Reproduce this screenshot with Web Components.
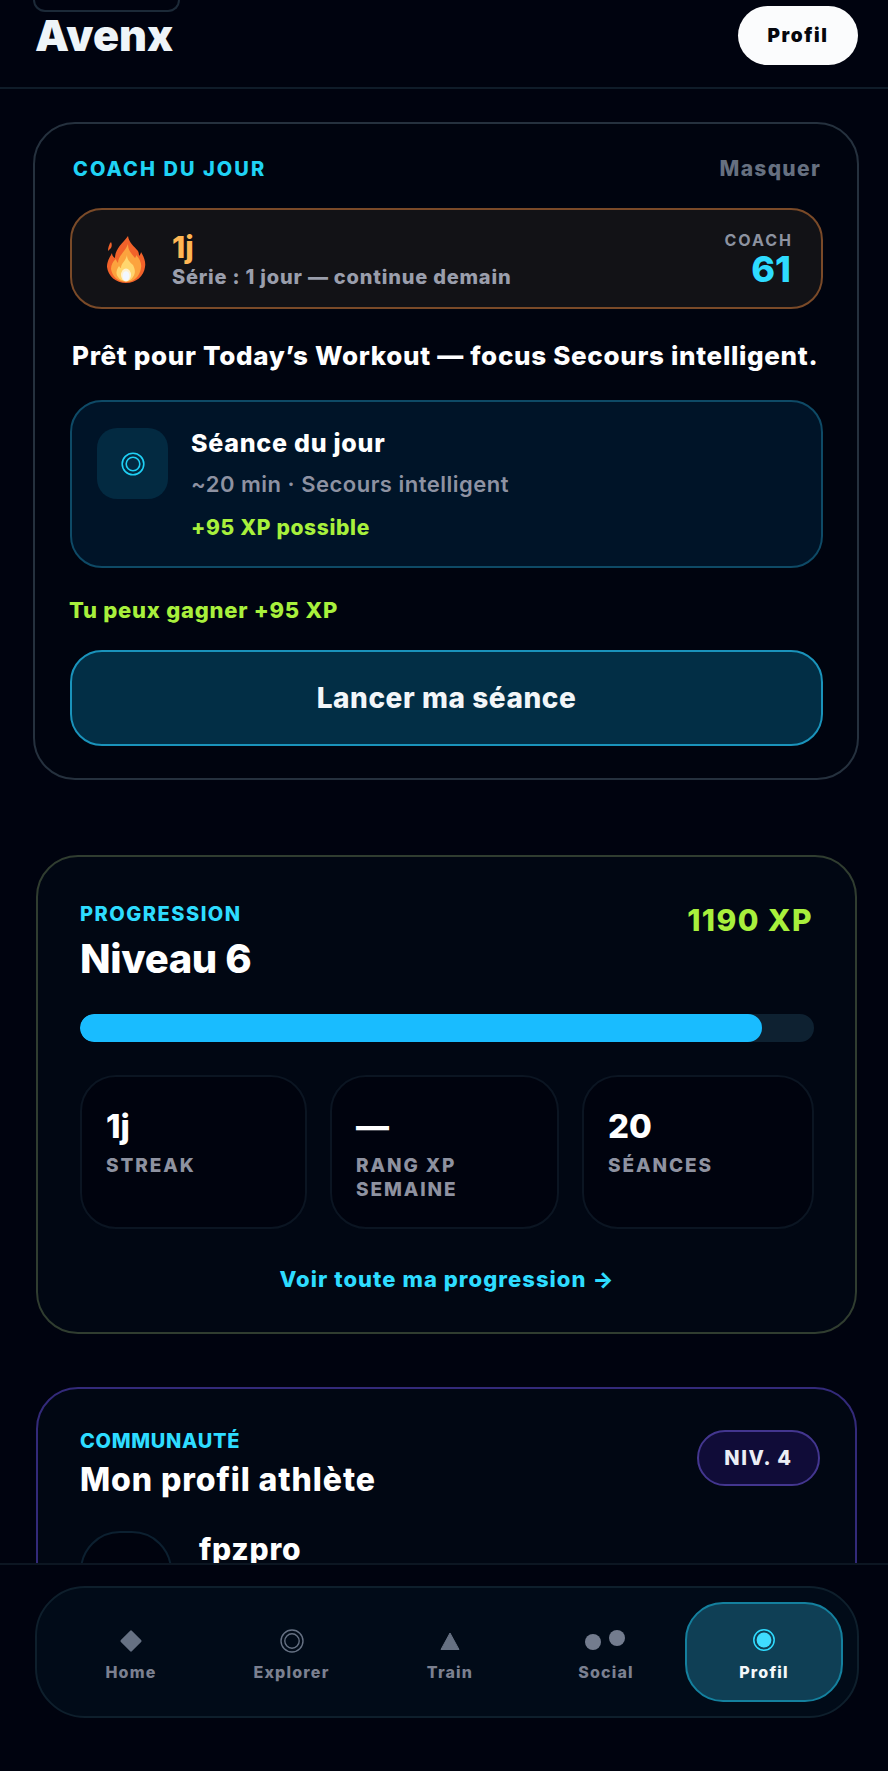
<!DOCTYPE html>
<html lang="fr">
<head>
<meta charset="utf-8">
<title>Avenx</title>
<style>
  html, body { margin: 0; background: #00030f; }
  body { font-family: Inter, "Liberation Sans", sans-serif; color: #fff; }
</style>
</head>
<body>

<app-shell>
  <top-header slot="header">
    <span slot="brand">Avenx</span>
    <span slot="action">Profil</span>
  </top-header>

  <coach-card>
    <span slot="title">COACH DU JOUR</span>
    <span slot="action">Masquer</span>
    <streak-banner>
      <span slot="value">1j</span>
      <span slot="text">Série : 1 jour — continue demain</span>
      <span slot="score-label">COACH</span>
      <span slot="score">61</span>
    </streak-banner>
    <span slot="message">Prêt pour Today’s Workout — focus Secours intelligent.</span>
    <session-card slot="session">
      <span slot="title">Séance du jour</span>
      <span slot="meta">~20 min · Secours intelligent</span>
      <span slot="xp">+95 XP possible</span>
    </session-card>
    <span slot="gain">Tu peux gagner +95 XP</span>
    <span slot="cta">Lancer ma séance</span>
  </coach-card>

  <progress-card>
    <span slot="eyebrow">PROGRESSION</span>
    <span slot="title">Niveau 6</span>
    <span slot="xp">1190 XP</span>
    <stat-tile><span slot="value">1j</span>STREAK</stat-tile>
    <stat-tile><span slot="value">—</span>RANG XP SEMAINE</stat-tile>
    <stat-tile><span slot="value">20</span>SÉANCES</stat-tile>
    <span slot="link">Voir toute ma progression →</span>
  </progress-card>

  <profile-card>
    <span slot="eyebrow">COMMUNAUTÉ</span>
    <span slot="title">Mon profil athlète</span>
    <span slot="badge">NIV. 4</span>
    <span slot="name">fpzpro</span>
  </profile-card>

  <bottom-nav slot="nav">
    <nav-item icon="home">Home</nav-item>
    <nav-item icon="explore">Explorer</nav-item>
    <nav-item icon="train">Train</nav-item>
    <nav-item icon="social">Social</nav-item>
    <nav-item icon="profile" active>Profil</nav-item>
  </bottom-nav>
</app-shell>

<script>
// small helper, every element is just a template + open shadow root
function defineElement(name, html) {
  const template = document.createElement('template');
  template.innerHTML = html;
  customElements.define(name, class extends HTMLElement {
    connectedCallback() {
      if (this.shadowRoot) return;
      this.attachShadow({ mode: 'open' }).appendChild(template.content.cloneNode(true));
    }
  });
}

defineElement('app-shell', `
  <style>
    :host { display: flex; flex-direction: column; height: 1771px; overflow: hidden; background: #00030f; }
    main { flex: 1; min-height: 0; overflow: hidden; display: flex; flex-direction: column; }
  </style>
  <slot name="header"></slot>
  <main><slot></slot></main>
  <slot name="nav"></slot>
`);

defineElement('top-header', `
  <style>
    :host { display: block; flex: none; height: 87px; border-bottom: 2px solid #0f1c29; position: relative; }
    .row { display: flex; justify-content: space-between; padding: 6px 30px 0 35px; }
    .stub { height: 12px; width: 147px; box-sizing: border-box;
      border: 2px solid #1c2a38; border-top: 0; border-radius: 0 0 16px 16px; position: absolute; top: 0; left: 33px; }
    .brand { font-size: 43px; font-weight: 900; line-height: 59px; letter-spacing: .1px; color: #eef4f8; }
    .action { width: 120px; height: 59px; border-radius: 30px; background: #fbfcfd; color: #05070d;
      display: flex; align-items: center; justify-content: center; font-size: 19px; font-weight: 900; letter-spacing: 1.6px; }
  </style>
  <div class="stub"></div>
  <div class="row">
    <div class="brand"><slot name="brand"></slot></div>
    <div class="action"><slot name="action"></slot></div>
  </div>
`);

defineElement('coach-card', `
  <style>
    :host { display: block; flex: none; margin: 33px 29px 0 33px; padding: 33px 34px 32px 35px; border: 2px solid #25313e;
      border-radius: 42px; background: #00040f; }
    .head { display: flex; justify-content: space-between; align-items: center; line-height: 24px; margin-bottom: 27px; }
    .title { color: #1fd3f5; font-size: 20px; font-weight: 800; letter-spacing: 2.05px; padding-left: 3px; }
    .action { color: #667080; font-size: 21px; font-weight: 800; letter-spacing: 1.3px; padding-right: 2px; }
    .message { font-size: 26px; font-weight: 800; line-height: 34px; margin: 30px 0 27px 2px; white-space: nowrap; letter-spacing: .68px; }
    .gain { color: #a8f03c; font-size: 22px; font-weight: 800; line-height: 26px; margin: 29px 0 27px -1px; letter-spacing: .75px; }
    .cta { height: 96px; box-sizing: border-box; border: 2px solid #1a93bb; border-radius: 32px; background: #022e45;
      display: flex; align-items: center; justify-content: center; color: #f2f6f9; font-size: 28px; font-weight: 800; letter-spacing: .55px; }
  </style>
  <div class="head">
    <div class="title"><slot name="title"></slot></div>
    <div class="action"><slot name="action"></slot></div>
  </div>
  <slot></slot>
  <div class="message"><slot name="message"></slot></div>
  <slot name="session"></slot>
  <div class="gain"><slot name="gain"></slot></div>
  <div class="cta"><slot name="cta"></slot></div>
`);

defineElement('streak-banner', `
  <style>
    :host { display: flex; align-items: center; height: 101px; box-sizing: border-box; padding: 0 30px 0 34px;
      border: 2px solid #7a4a28; border-radius: 32px; background: #121216; }
    svg { width: 40px; height: 48px; flex: none; margin-right: 26px; }
    .text { flex: 1; }
    .value { color: #ffb653; font-size: 30px; font-weight: 800; line-height: 32px; margin-top: 3px; }
    .line { color: #9a9eac; font-size: 20px; font-weight: 800; line-height: 26px; margin-top: 1px; letter-spacing: .8px; }
    .score { text-align: right; }
    .label { color: #8d92a0; font-size: 16px; font-weight: 700; letter-spacing: 2px; line-height: 20px; margin-right: -2px; }
    .num { color: #2edcff; font-size: 36px; font-weight: 800; line-height: 38px; }
  </style>
  <svg viewBox="0 0 40 48">
    <path fill="#f2622a" d="M22 1c1 7 6 10 10 15 1 2 1 4 1 5 1-1 2-3 2-4 3 5 5 10 4 15-1 9-9 16-19 16S2 41 1 32c0-6 3-10 5-14 0 2 1 4 3 5 0-9 7-14 13-22z"/>
    <path fill="#f2622a" d="M5 7c1 2 1 4 0 6l-3 3c0-3 1-7 3-9z"/>
    <path fill="#fca33e" d="M22 9c0 7 4 10 7 14 1-1 1-2 1-3 4 4 6 9 5 13-1 8-7 14-15 14S6 41 5 34c0-4 2-8 5-10 0 1 1 3 2 4 0-7 7-11 10-19z"/>
    <path fill="#ffd66e" d="M21 20c0 5 3 7 6 10 2 4 3 8 0 12-2 3-4 4-7 4s-6-1-8-4c-3-4-1-8 1-11 1 1 1 2 2 2 0-5 5-7 6-13z"/>
    <ellipse cx="20" cy="40" rx="5" ry="6.5" fill="#fff1cf"/>
    <ellipse cx="20" cy="41" rx="3.4" ry="4.8" fill="#f2f7ff"/>
  </svg>
  <div class="text">
    <div class="value"><slot name="value"></slot></div>
    <div class="line"><slot name="text"></slot></div>
  </div>
  <div class="score">
    <div class="label"><slot name="score-label"></slot></div>
    <div class="num"><slot name="score"></slot></div>
  </div>
`);

defineElement('session-card', `
  <style>
    :host { display: flex; align-items: flex-start; gap: 23px; height: 168px; box-sizing: border-box; padding: 26px 25px;
      border: 2px solid #0e4a66; border-radius: 32px; background: #001428; }
    .icon { width: 71px; height: 71px; flex: none; border-radius: 20px; background: #032a41;
      display: flex; align-items: center; justify-content: center; }
    svg { width: 24px; height: 24px; }
    .body { margin-top: -1px; }
    .title { font-size: 25px; font-weight: 800; line-height: 32px; letter-spacing: .75px; }
    .meta { color: #8e92a2; font-size: 22px; font-weight: 600; line-height: 30px; margin-top: 10px; letter-spacing: .5px; }
    .xp { color: #a8f03c; font-size: 21px; font-weight: 800; line-height: 26px; margin-top: 16px; letter-spacing: .65px; }
  </style>
  <div class="icon">
    <svg viewBox="0 0 24 24" fill="none" stroke="#1fd0f5" stroke-width="1.6">
      <circle cx="12" cy="12" r="10.8"/><circle cx="12" cy="12" r="6.8"/>
    </svg>
  </div>
  <div class="body">
    <div class="title"><slot name="title"></slot></div>
    <div class="meta"><slot name="meta"></slot></div>
    <div class="xp"><slot name="xp"></slot></div>
  </div>
`);

defineElement('progress-card', `
  <style>
    :host { display: block; flex: none; height: 479px; box-sizing: border-box; margin: 75px 31px 0 36px; padding: 45px 41px 0 42px;
      border: 2px solid #303d30; border-radius: 42px; background: #010713; }
    .head { display: flex; justify-content: space-between; height: 112px; }
    .eyebrow { color: #2edcff; font-size: 20px; font-weight: 800; letter-spacing: 1.5px; line-height: 24px; }
    .title { font-size: 40px; font-weight: 800; line-height: 48px; margin-top: 9px; letter-spacing: -.4px; }
    .xp { color: #a8f03c; font-size: 30px; font-weight: 800; line-height: 36px; letter-spacing: 1.4px; padding-right: 1px; }
    .track { height: 28px; border-radius: 14px; background: #0e2131; overflow: hidden; margin-bottom: 33px; }
    .fill { width: 682px; height: 100%; border-radius: 14px; background: #19bcff; }
    .grid { display: grid; grid-template-columns: 227px 229px 232px; gap: 23px; }
    .link { color: #2edcff; font-size: 22px; font-weight: 800; line-height: 30px; text-align: center; margin-top: 35px; letter-spacing: 1.05px; }
  </style>
  <div class="head">
    <div>
      <div class="eyebrow"><slot name="eyebrow"></slot></div>
      <div class="title"><slot name="title"></slot></div>
    </div>
    <div class="xp"><slot name="xp"></slot></div>
  </div>
  <div class="track"><div class="fill"></div></div>
  <div class="grid"><slot></slot></div>
  <div class="link"><slot name="link"></slot></div>
`);

defineElement('stat-tile', `
  <style>
    :host { display: block; height: 154px; box-sizing: border-box; padding: 28px 24px 0 24px;
      border: 2px solid #0b1522; border-radius: 36px; background: #00030e;
      color: #8e92a0; font-size: 19px; font-weight: 800; line-height: 24px; letter-spacing: 1.9px; }
    .value { color: #fff; font-size: 33px; font-weight: 800; line-height: 42px; margin-bottom: 7px; letter-spacing: 0; }
  </style>
  <div class="value"><slot name="value"></slot></div>
  <slot></slot>
`);

defineElement('profile-card', `
  <style>
    :host { display: block; flex: none; height: 300px; box-sizing: border-box; margin: 53px 31px 0 36px; padding: 40px 35px 0 42px;
      border: 2px solid #332a7a; border-radius: 42px; background: #010713; }
    .head { display: flex; justify-content: space-between; align-items: flex-start; }
    .eyebrow { color: #2edcff; font-size: 20px; font-weight: 800; letter-spacing: .7px; line-height: 24px; }
    .title { font-size: 32px; font-weight: 800; line-height: 40px; margin-top: 7px; letter-spacing: .9px; }
    .badge { width: 123px; height: 56px; box-sizing: border-box; margin-top: 1px; border: 2px solid #43368f; border-radius: 28px;
      background: #100c38; display: flex; align-items: center; justify-content: center;
      color: #eceef5; font-size: 20px; font-weight: 800; letter-spacing: 1.6px; }
    .who { display: flex; gap: 27px; margin-top: 31px; }
    .avatar { width: 92px; height: 92px; box-sizing: border-box; border: 2px solid #0c2030; border-radius: 40px; background: #00030e; flex: none; }
    .name { font-size: 30px; font-weight: 800; line-height: 36px; letter-spacing: .8px; }
  </style>
  <div class="head">
    <div>
      <div class="eyebrow"><slot name="eyebrow"></slot></div>
      <div class="title"><slot name="title"></slot></div>
    </div>
    <div class="badge"><slot name="badge"></slot></div>
  </div>
  <div class="who">
    <div class="avatar"></div>
    <div class="name"><slot name="name"></slot></div>
  </div>
`);

defineElement('bottom-nav', `
  <style>
    :host { display: block; flex: none; height: 208px; box-sizing: border-box; padding: 21px 29px 0 35px;
      background: #00030f; border-top: 2px solid #0c1622; position: relative; }
    .pill { height: 132px; box-sizing: border-box; padding: 14px 13px 0 15px; border: 2px solid #0e1f2c;
      border-radius: 50px; background: #010b18;
      display: grid; grid-template-columns: 158px 163px 154px 158px 158px; align-items: start; }
  </style>
  <div class="pill"><slot></slot></div>
`);

const navIcons = {
  home: '<svg viewBox="0 0 24 24" width="24" height="24"><rect x="4.1" y="4.1" width="15.8" height="15.8" rx="1.5" fill="#667183" transform="rotate(45 12 12)"/></svg>',
  explore: '<svg viewBox="0 0 24 24" width="24" height="24" fill="none" stroke="#667183" stroke-width="1.4"><circle cx="12" cy="12" r="11"/><circle cx="12" cy="12" r="7.2"/></svg>',
  train: '<svg viewBox="0 0 24 24" width="24" height="24"><path d="M12 4 21 20.5H3z" fill="#667183" stroke="#667183" stroke-linejoin="round"/></svg>',
  social: '<svg viewBox="0 0 42 24" width="42" height="24"><circle cx="8" cy="13" r="8" fill="#737c8e"/><circle cx="32" cy="9" r="8" fill="#737c8e"/></svg>',
  profile: '<svg viewBox="0 0 24 24" width="24" height="24"><circle cx="12" cy="11" r="10.2" fill="none" stroke="#2edcff" stroke-width="1.5"/><circle cx="12" cy="11" r="7.4" fill="#3fdcff"/></svg>'
};

class NavItem extends HTMLElement {
  connectedCallback() {
    if (this.shadowRoot) return;
    this.attachShadow({ mode: 'open' }).innerHTML = `
      <style>
        :host { display: flex; flex-direction: column; align-items: center; height: 100px; box-sizing: border-box;
          padding-top: 25px; color: #7b8090; font-size: 16px; font-weight: 800; letter-spacing: 1.2px; line-height: 24px;
          border: 2px solid transparent; border-radius: 38px; }
        :host([active]) { background: #0f3f55; border-color: #14809e; color: #f4f8fa; }
        .icon { height: 24px; display: flex; margin-bottom: 7px; }
      </style>
      <div class="icon">${navIcons[this.getAttribute('icon')]}</div>
      <slot></slot>
    `;
  }
}
customElements.define('nav-item', NavItem);
</script>
</body>
</html>
